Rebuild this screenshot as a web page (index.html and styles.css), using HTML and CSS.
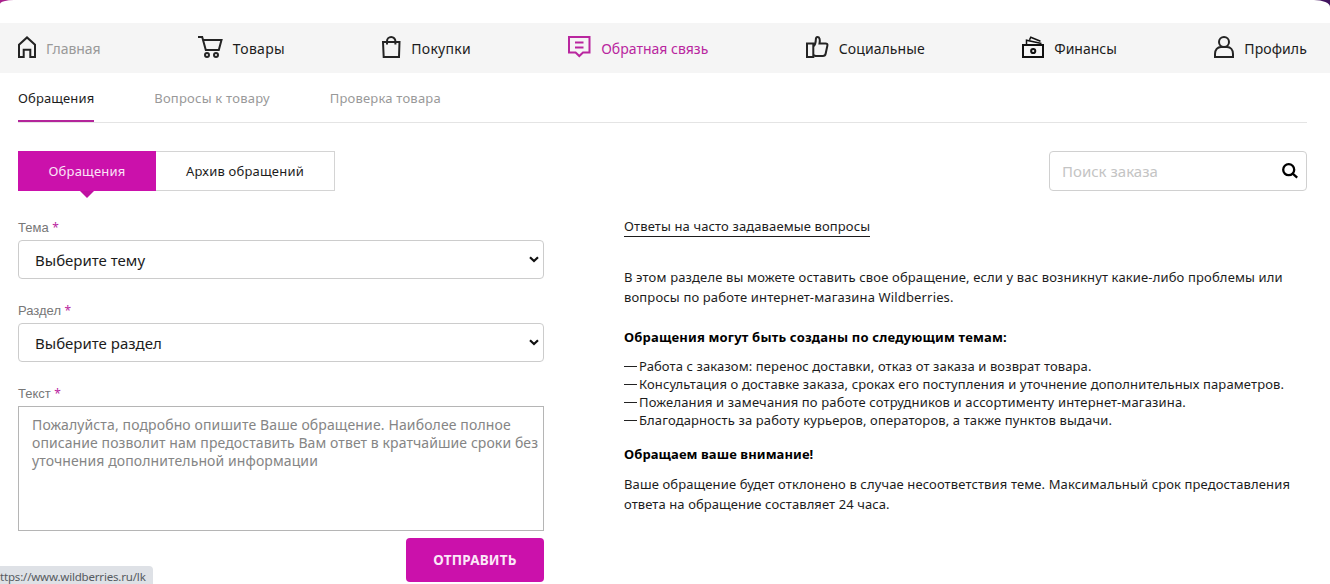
FILE: index.html
```
<!DOCTYPE html>
<html lang="ru">
<head>
<meta charset="utf-8">
<title>Обратная связь</title>
<link rel="stylesheet" href="styles.css">
</head>
<body>
<div class="backdrop">
<div class="page">
  <nav class="nav">
    <a class="nav-item muted"><svg width="18" height="22" viewBox="0 0 18 22"><path d="M1 8.700 9 1.400l8 7.300V21h-4.700v-7.200H5.700V21H1z"/></svg><span class="t-home">Главная</span></a>
    <a class="nav-item"><svg width="25" height="22" viewBox="0 0 25 22"><path d="M0 1h4.200l3.600 13h13L23.500 4H5.200"/><circle cx="9" cy="19" r="2"/><circle cx="18" cy="19" r="2"/></svg><span class="t-goods">Товары</span></a>
    <a class="nav-item"><svg width="19" height="22" viewBox="0 0 19 22"><path d="M1 6h16.500L17 21H1.700zM5 8.500V5.200a4.200 4.200 0 0 1 8.400 0v3.300"/></svg><span class="t-buy">Покупки</span></a>
    <a class="nav-item active"><svg width="23" height="22" viewBox="0 0 23 22"><path d="M1 1h20.500v15.500h-6.500L11.300 20l-3.700-3.500H1zM7 6.500h8.500M7 11.500h8.500"/></svg><span class="t-feedback">Обратная связь</span></a>
    <a class="nav-item"><svg width="23" height="22" viewBox="0 0 23 22"><path d="M1 7.500h6.300V21H1zM7.300 10.500c2.200-1.700 2.500-4 2.500-6.500 0-2 .6-3 1.700-3C13.500 1 14.300 3.500 13.500 7.500h6c1.500 0 2.200.7 1.900 2l-1.700 8c-.3 1.700-1.200 2.500-2.800 2.500H9.500l-2.200-1.500"/></svg><span class="t-social">Социальные</span></a>
    <a class="nav-item finance"><svg width="22" height="22" viewBox="0 0 22 22"><path d="M1 9h20v12H1z"/><circle cx="11.200" cy="15" r="2.100"/><path class="thin" d="M4.500 8V4.200L19.500 7.600M7.500 3.800 8.800 1.200l9.700 4"/></svg><span class="t-finance">Финансы</span></a>
    <a class="nav-item"><svg width="20" height="22" viewBox="0 0 20 22"><circle cx="10" cy="6" r="5"/><path d="M1 21v-3c0-4.200 2.500-7 6-7h6c3.500 0 6 2.800 6 7v3z"/></svg><span class="t-profile">Профиль</span></a>
  </nav>

  <div class="subnav">
    <a class="sub current"><span>Обращения</span></a>
    <a class="sub"><span class="t-questions">Вопросы к товару</span></a>
    <a class="sub"><span class="t-check">Проверка товара</span></a>
  </div>

  <div class="toolbar">
    <div class="tabs">
      <button class="tab selected"><span>Обращения</span></button>
      <button class="tab archive"><span>Архив обращений</span></button>
    </div>
    <div class="search"><span>Поиск заказа</span><svg width="16" height="16" viewBox="0 0 16 16"><circle cx="6.700" cy="6.700" r="5.500"/><path d="m10.700 10.700 4.500 4"/></svg></div>
  </div>

  <main class="content">
    <form class="form">
      <label class="label">Тема <b>*</b></label>
      <div class="select"><span class="t-theme">Выберите тему</span><svg width="10" height="7" viewBox="0 0 10 7"><path d="m1 1.200 4 3.800 4-3.800"/></svg></div>
      <label class="label">Раздел <b>*</b></label>
      <div class="select"><span class="t-section">Выберите раздел</span><svg width="10" height="7" viewBox="0 0 10 7"><path d="m1 1.200 4 3.800 4-3.800"/></svg></div>
      <label class="label">Текст <b>*</b></label>
      <div class="textarea"><span class="m1">Пожалуйста, подробно опишите Ваше обращение. Наиболее полное</span><br><span class="m2">описание позволит нам предоставить Вам ответ в кратчайшие сроки без</span><br><span class="m3">уточнения дополнительной информации</span></div>
      <button class="submit" type="button"><span>ОТПРАВИТЬ</span></button>
    </form>
    <section class="info">
      <a class="faq">Ответы на часто задаваемые вопросы</a>
      <p class="intro"><span class="p1">В этом разделе вы можете оставить свое обращение, если у вас возникнут какие-либо проблемы или</span><br><span class="p2">вопросы по работе интернет-магазина Wildberries.</span></p>
      <h2 class="h-topics"><span>Обращения могут быть созданы по следующим темам:</span></h2>
      <ul class="topics">
        <li><i></i><span class="l1">Работа с заказом: перенос доставки, отказ от заказа и возврат товара.</span></li>
        <li><i></i><span class="l2">Консультация о доставке заказа, сроках его поступления и уточнение дополнительных параметров.</span></li>
        <li><i></i><span class="l3">Пожелания и замечания по работе сотрудников и ассортименту интернет-магазина.</span></li>
        <li><i></i><span class="l4">Благодарность за работу курьеров, операторов, а также пунктов выдачи.</span></li>
      </ul>
      <h2 class="h-note"><span>Обращаем ваше внимание!</span></h2>
      <p class="note"><span class="n1">Ваше обращение будет отклонено в случае несоответствия теме. Максимальный срок предоставления</span><br><span class="n2">ответа на обращение составляет 24 часа.</span></p>
    </section>
  </main>
</div>
<div class="status">ttps://www.wildberries.ru/lk</div>
</div>
</body>
</html>
```
FILE: styles.css
```
* { box-sizing: border-box; }
body { margin: 0; height: 584px; overflow: hidden; font: 13px/20px "Noto Sans", "Open Sans", sans-serif; color: #1c1c1c; }
span, a, label { white-space: nowrap; }
svg { flex: none; fill: none; stroke: #242424; stroke-width: 2; display: block; }
button { font: inherit; margin: 0; padding: 0; cursor: pointer; }
.backdrop { position: relative; height: 584px; background: linear-gradient(90deg, #a8218c, #42145f); }
.page { height: 584px; background: #fff; border-radius: 14px 16px 0 0 / 4px 7px 0 0; padding-top: 23px; }

.nav { height: 50px; padding: 0 23px 0 18px; display: flex; justify-content: space-between; align-items: center; background: #f5f5f5; font-size: 14px; }
.nav-item { display: flex; align-items: flex-start; gap: 10px; height: 22px; margin-top: -2px; color: #1c1c1c; }
.nav-item span { line-height: 26px; }
.t-home { letter-spacing: -0.1px; }
.t-goods { letter-spacing: 0.3px; }
.t-buy { letter-spacing: 0.25px; }
.t-social { letter-spacing: 0.1px; }
.t-profile { letter-spacing: 0.1px; }
.nav-item.muted { color: #999; }
.nav-item.active { color: #b9269f; }
.active svg { stroke: #b9269f; }
.finance svg { stroke: #111; }
.finance .thin { stroke-width: 1.5; }

.subnav { margin: 0 23px 0 18px; height: 50px; border-bottom: 1px solid #e4e4e4; display: flex; gap: 60px; }
.sub { height: 49px; padding-top: 15px; color: #999; }
.current { color: #1c1c1c; border-bottom: 2px solid #b3259a; letter-spacing: 0.12px; }
.t-questions { letter-spacing: 0.22px; }
.t-check { letter-spacing: 0.2px; }

.toolbar { margin: 28px 23px 0 18px; height: 40px; display: flex; justify-content: space-between; }
.tabs { display: flex; }
.tab { height: 40px; border: 1px solid #d4d4d4; border-left: 0; background: #fff; color: #1c1c1c; width: 179px; letter-spacing: 0.2px; }
.selected { position: relative; width: 138px; border: 0; background: #cb11ab; color: #fbe4f7; }
.selected::after { content: ""; position: absolute; left: 62px; top: 40px; border: 7px solid transparent; border-bottom: 0; border-top-color: #c010a2; }
.search { width: 258px; border: 1px solid #d0d0d0; border-radius: 4px; padding: 0 8px 0 12px; display: flex; align-items: center; justify-content: space-between; font-size: 15px; color: #c4c4c4; }
.search svg { stroke: #000; stroke-width: 2.300; }

.content { display: flex; gap: 80px; padding: 26px 0 0 18px; }
.form { width: 526px; display: flex; flex-direction: column; }
.label { height: 23px; font: 13px/22px "Liberation Sans", Arial, sans-serif; color: #777; }
.label b { font: 12px/20px "Noto Sans", sans-serif; color: #b9269f; }
.select { height: 39px; border: 1px solid #ccc; border-radius: 4px; margin-bottom: 21px; padding: 0 4px 0 16px; display: flex; align-items: center; justify-content: space-between; font-size: 15px; }
.select svg { stroke: #111; stroke-width: 2.200; }
.textarea { height: 125px; border: 1px solid #b5b5b5; padding: 9px 0 0 13px; font-size: 14px; line-height: 18px; color: #858585; }
.m1 { letter-spacing: 0.125px; }
.m2 { letter-spacing: 0.085px; }
.m3 { letter-spacing: 0.1px; }
.submit { align-self: flex-end; width: 138px; height: 44px; margin-top: 7px; border: 0; border-radius: 4px; background: #cb11ab; color: #fbe8f8; font-size: 13.500px; font-weight: 700; letter-spacing: 0.2px; }

.info { width: 690px; margin-top: -1px; letter-spacing: 0.12px; }
.faq { display: inline-block; height: 21px; border-bottom: 1px solid #1c1c1c; margin-bottom: 30px; vertical-align: top; }
p { margin: 0; }
.p1, .p2 { letter-spacing: 0.147px; }
h2 { margin: 20px 0 10px; font-size: 13px; line-height: 20px; font-weight: 700; color: #000; }
.h-topics { letter-spacing: 0.18px; }
.topics { margin: 0; padding: 0; list-style: none; line-height: 18px; }
.topics li { display: flex; align-items: center; height: 18px; }
.topics i { width: 13px; height: 1px; background: #222; margin-right: 2px; }
.l1 { letter-spacing: 0.108px; }
.l3 { letter-spacing: 0.155px; }
.l4 { letter-spacing: 0.13px; }
.h-note { margin-top: 15px; letter-spacing: 0.09px; }
.n2 { letter-spacing: 0.09px; }

.status { position: absolute; left: 0; bottom: 0; width: 153px; height: 18px; border-radius: 0 4px 0 0; background: #dee1e6; color: #555a60; font-size: 11.500px; line-height: 22px; letter-spacing: -0.18px; white-space: nowrap; }
```
